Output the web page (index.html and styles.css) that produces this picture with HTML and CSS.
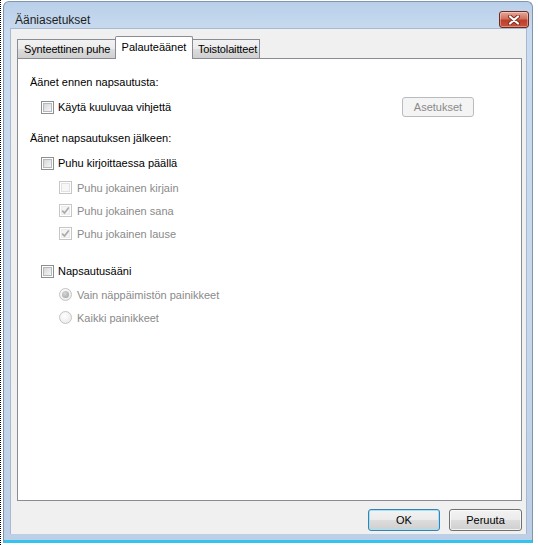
FILE: index.html
```html
<!DOCTYPE html>
<html lang="fi">
<head>
	<meta charset="utf-8">
	<title>Ääniasetukset</title>
	<link rel="stylesheet" href="styles.css">
</head>
<body>
<div class="screen">
	<div class="window">
		<div class="titlebar">
			<span class="title">Ääniasetukset</span>
			<span class="close">
				<svg width="14" height="10" viewBox="0 0 14 10">
					<path d="M3 1.5 L11 8.5 M11 1.5 L3 8.5" stroke="#7a2c1e" stroke-width="4" stroke-linecap="round"/>
					<path d="M3 1.5 L11 8.5 M11 1.5 L3 8.5" stroke="#fff" stroke-width="2.2" stroke-linecap="round"/>
				</svg>
			</span>
		</div>

		<div class="client">
			<div class="tabs">
				<div class="tab first">Synteettinen puhe</div>
				<div class="tab active">Palauteäänet</div>
				<div class="tab last">Toistolaitteet</div>
			</div>

			<div class="panel">
				<div class="group-label top">Äänet ennen napsautusta:</div>
				<div class="row hint-row">
					<label class="check"><span class="box"></span>Käytä kuuluvaa vihjettä</label>
					<span class="btn disabled">Asetukset</span>
				</div>

				<div class="group-label second">Äänet napsautuksen jälkeen:</div>
				<div class="row main-row">
					<label class="check"><span class="box"></span>Puhu kirjoittaessa päällä</label>
				</div>
				<div class="row sub-row first-sub">
					<label class="check off"><span class="box"></span>Puhu jokainen kirjain</label>
				</div>
				<div class="row sub-row">
					<label class="check off on"><span class="box"><svg width="9" height="9" viewBox="0 0 9 9"><path d="M1.2 4.6 L3.5 7 L7.8 1.4" fill="none" stroke="#a9a9a9" stroke-width="1.6"/></svg></span>Puhu jokainen sana</label>
				</div>
				<div class="row sub-row">
					<label class="check off on"><span class="box"><svg width="9" height="9" viewBox="0 0 9 9"><path d="M1.2 4.6 L3.5 7 L7.8 1.4" fill="none" stroke="#a9a9a9" stroke-width="1.6"/></svg></span>Puhu jokainen lause</label>
				</div>

				<div class="row main-row click-row">
					<label class="check"><span class="box"></span>Napsautusääni</label>
				</div>
				<div class="row sub-row radio-first">
					<label class="radio off on"><span class="dot"></span>Vain näppäimistön painikkeet</label>
				</div>
				<div class="row sub-row radio-next">
					<label class="radio off"><span class="dot"></span>Kaikki painikkeet</label>
				</div>
			</div>

			<div class="actions">
				<span class="btn default">OK</span>
				<span class="btn">Peruuta</span>
			</div>
		</div>
	</div>
</div>
</body>
</html>
```

FILE: styles.css
```css
html, body {
	margin: 0;
	padding: 0;
	background: #fff;
}
body {
	font-family: "Liberation Sans", Arial, sans-serif;
	font-size: 11px;
	color: #000;
	width: 538px;
	height: 545px;
	overflow: hidden;
}

.screen {
	height: 545px;
	border-left: 1px dotted #000;
	padding-left: 2px;
	padding-top: 1px;
	box-sizing: border-box;
}

/* window frame */
.window {
	width: 530px;
	height: 542px;
	box-sizing: border-box;
	border: 1px solid #7f95b0;
	border-bottom: 3px solid #34c3ef;
	border-radius: 6px 6px 0 0;
	background: linear-gradient(#b9cfe9, #c9dbf0 30px, #c7d8ec 60%, #bccfe6);
	display: flex;
	flex-direction: column;
}

.titlebar {
	height: 26px;
	display: flex;
	justify-content: space-between;
	align-items: flex-start;
	padding: 0 3px 0 11px;
}
.title {
	margin-top: 11px;
	font-size: 12px;
	color: #1e1e1e;
}
.close {
	margin-top: 9px;
	width: 28px;
	height: 15px;
	border: 1px solid #6e2a21;
	border-radius: 3px;
	background: linear-gradient(#e7a795, #d1715c 45%, #bd3f2a 55%, #c8533d);
	box-shadow: inset 0 0 0 1px rgba(255, 255, 255, .35);
	display: flex;
	align-items: center;
	justify-content: center;
}

.client {
	margin: 0 5px 0 6px;
	height: 506px;
	background: #f0f0f0;
	border: 1px solid #a8b9cf;
	border-bottom: none;
	padding: 7px 0 0 6px;
	box-sizing: border-box;
}

/* tabs */
.tabs {
	display: flex;
	align-items: flex-end;
	height: 22px;
	position: relative;
	z-index: 1;
}
.tab {
	height: 19px;
	box-sizing: border-box;
	border: 1px solid #898c95;
	border-bottom: none;
	background: linear-gradient(#f2f2f2, #ebebeb 50%, #dddddd 51%, #cfcfcf);
	line-height: 18px;
	padding: 0 0 0 6px;
	white-space: nowrap;
	overflow: hidden;
	letter-spacing: -0.15px;
}
.tab.first {
	width: 98px;
	border-right: none;
}
.tab.active {
	width: 78px;
	height: 23px;
	margin-bottom: -1px;
	background: #fff;
	line-height: 20px;
	text-align: center;
	padding: 0;
	border-radius: 2px 2px 0 0;
	letter-spacing: 0;
}
.tab.last {
	width: 67px;
	border-left: none;
	padding-left: 5px;
}

.panel {
	width: 505px;
	height: 443px;
	box-sizing: border-box;
	background: #fff;
	border: 1px solid #898c95;
	padding: 16px 0 0 12px;
}

.group-label {
	height: 14px;
	line-height: 14px;
}
.group-label.second {
	margin-top: 14px;
}

.row {
	display: flex;
	align-items: center;
	height: 20px;
}
.hint-row {
	margin-top: 8px;
	padding-left: 11px;
	justify-content: space-between;
	padding-right: 47px;
}
.main-row {
	margin-top: 8px;
	padding-left: 11px;
}
.click-row {
	margin-top: 16px;
}
.sub-row {
	height: 23px;
	padding-left: 29px;
}
.first-sub {
	margin-top: 3px;
}
.radio-first {
	margin-top: 2px;
}

.check, .radio {
	display: flex;
	align-items: center;
	gap: 4px;
}
.check.off, .radio.off {
	color: #8a8a8a;
	gap: 5px;
}

.box {
	width: 13px;
	height: 13px;
	box-sizing: border-box;
	border: 1px solid #8e8f8f;
	background: #fff;
	position: relative;
	display: flex;
	align-items: center;
	justify-content: center;
}
.box::before {
	content: "";
	position: absolute;
	left: 1px;
	top: 1px;
	right: 1px;
	bottom: 1px;
	border: 1px solid #b4b9bf;
	background: linear-gradient(135deg, #d6d6d6, #f6f6f6);
}
.off .box {
	border-color: #c6c6c6;
}
.off .box::before {
	border-color: #e2e2e2;
	background: #f7f7f7;
}
.on .box::before {
	background: #f4f4f4;
	border-color: #ececec;
}
.box svg {
	position: relative;
}

.dot {
	width: 13px;
	height: 13px;
	box-sizing: border-box;
	border-radius: 50%;
	border: 1px solid #c4c4c4;
	background: radial-gradient(circle at 40% 35%, #ffffff, #e6e6e6);
	position: relative;
}
.on .dot::after {
	content: "";
	position: absolute;
	left: 2px;
	top: 2px;
	width: 7px;
	height: 7px;
	border-radius: 50%;
	background: radial-gradient(circle at 40% 35%, #d7d7d7, #9c9c9c);
}

/* buttons */
.btn {
	height: 22px;
	box-sizing: border-box;
	border: 1px solid #707070;
	border-radius: 3px;
	background: linear-gradient(#f2f2f2, #ebebeb 50%, #dddddd 51%, #cfcfcf);
	box-shadow: inset 0 0 0 1px rgba(255, 255, 255, .7);
	display: flex;
	align-items: center;
	justify-content: center;
	font-size: 11px;
}
.btn.disabled {
	width: 72px;
	height: 20px;
	border-color: #b9bcbf;
	background: #f4f4f4;
	color: #8a8a8a;
	box-shadow: none;
}
.btn.default {
	width: 72px;
	border-color: #3c7fb1;
	box-shadow: inset 0 0 0 1px #9fe3f7;
}
.actions {
	width: 505px;
	display: flex;
	justify-content: flex-end;
	gap: 9px;
	margin-top: 8px;
}
.actions .btn:last-child {
	width: 73px;
}
```
